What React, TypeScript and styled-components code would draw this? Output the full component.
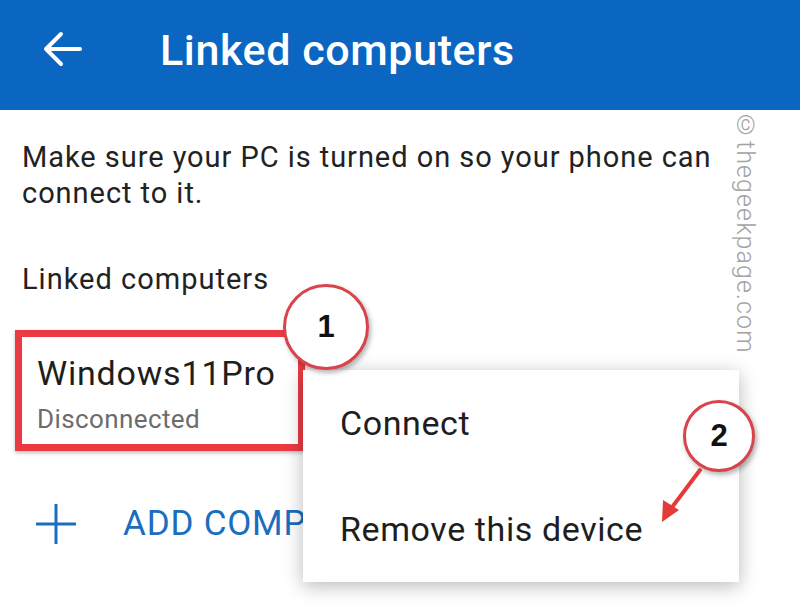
import React from "react";
import styled, { createGlobalStyle } from "styled-components";

const GlobalStyle = createGlobalStyle`
    body {
        margin: 0;
        background: #ffffff;
        font-family: Roboto, "Noto Sans", Arial, sans-serif;
        overflow: hidden;
    }
`;

const Screen = styled.div`
    position: relative;
    width: 800px;
    height: 611px;
    overflow: hidden;
    background: #ffffff;
`;

const AppBar = styled.header`
    display: flex;
    align-items: center;
    height: 110px;
    padding-left: 40px;
    background-color: #0b66c2;
    box-sizing: border-box;
`;

const BackButton = styled.button`
    display: flex;
    align-items: center;
    justify-content: center;
    width: 44px;
    height: 44px;
    padding: 0;
    border: none;
    background: transparent;
    margin-top: -12px;
`;

const AppTitle = styled.h1`
    margin: -10px 0 0 76px;
    font-size: 43px;
    font-weight: 500;
    color: #ffffff;
    letter-spacing: 0.6px;
`;

const Content = styled.main`
    padding: 29px 22px 0;
`;

const Intro = styled.p`
    margin: 0;
    font-size: 29px;
    line-height: 36px;
    letter-spacing: 0.95px;
    color: #222222;
`;

const SectionLabel = styled.h2`
    margin: 50px 0 0;
    font-size: 29px;
    line-height: 36px;
    letter-spacing: 1px;
    font-weight: 400;
    color: #222222;
`;

// red highlight drawn around the device row
const DeviceCard = styled.div`
    width: 261px;
    margin: 33px 0 0 -7px;
    padding: 16px 0 9px 15px;
    border: 7px solid #ec3a42;
    box-shadow: 0 2px 4px rgba(0, 0, 0, 0.25);
`;

const DeviceName = styled.div`
    font-size: 34px;
    line-height: 40px;
    letter-spacing: 0.8px;
    color: #1e1e1e;
`;

const DeviceStatus = styled.div`
    margin-top: 10px;
    font-size: 26px;
    line-height: 32px;
    letter-spacing: 0.4px;
    color: #6c6c6c;
`;

const AddRow = styled.div`
    display: flex;
    align-items: center;
    gap: 46px;
    margin: 52px 0 0 13px;
`;

const AddLabel = styled.span`
    font-size: 35px;
    line-height: 40px;
    letter-spacing: 0.8px;
    color: #1a6dbf;
    white-space: nowrap;
`;

const Menu = styled.ul`
    position: absolute;
    left: 303px;
    top: 370px;
    width: 436px;
    margin: 0;
    padding: 0;
    list-style: none;
    background: #ffffff;
    box-shadow: 0 4px 18px rgba(0, 0, 0, 0.28);
`;

const MenuItem = styled.li`
    display: flex;
    align-items: center;
    height: 106px;
    padding-left: 37px;
    font-size: 34px;
    letter-spacing: 0.6px;
    color: #1e1e1e;
`;

const Callout = styled.div<{ $x: number; $y: number; $r: number }>`
    position: absolute;
    left: ${({ $x, $r }) => $x - $r}px;
    top: ${({ $y, $r }) => $y - $r}px;
    width: ${({ $r }) => $r * 2}px;
    height: ${({ $r }) => $r * 2}px;
    box-sizing: border-box;
    display: flex;
    align-items: center;
    justify-content: center;
    border: 3px solid #d8434c;
    border-radius: 50%;
    background: #ffffff;
    box-shadow: 2px 3px 5px rgba(0, 0, 0, 0.3);
    font-family: "Liberation Sans", Arial, sans-serif;
    font-size: 31px;
    font-weight: 700;
    color: #111111;
`;

const PointerArrow = styled.svg`
    position: absolute;
    left: 640px;
    top: 460px;
`;

const Watermark = styled.div`
    position: absolute;
    left: 731px;
    top: 111px;
    writing-mode: vertical-rl;
    font-size: 25px;
    font-weight: 300;
    letter-spacing: 1.1px;
    color: #a3a3a3;
`;

export default function App() {
    return (
        <>
            <GlobalStyle />
            <Screen>
                <AppBar>
                    <BackButton aria-label="Back">
                        <svg width="40" height="36" viewBox="0 0 40 36" fill="none">
                            <path d="M38 18H4M19 3L4 18l15 15" stroke="#ffffff" strokeWidth="4" strokeLinecap="round" strokeLinejoin="round" />
                        </svg>
                    </BackButton>
                    <AppTitle>Linked computers</AppTitle>
                </AppBar>
                <Content>
                    <Intro>
                        Make sure your PC is turned on so your phone can
                        <br />
                        connect to it.
                    </Intro>
                    <SectionLabel>Linked computers</SectionLabel>
                    <DeviceCard>
                        <DeviceName>Windows11Pro</DeviceName>
                        <DeviceStatus>Disconnected</DeviceStatus>
                    </DeviceCard>
                    <AddRow>
                        <svg width="42" height="42" viewBox="0 0 42 42">
                            <path d="M21 1v40M1 21h40" stroke="#1a6dbf" strokeWidth="3" />
                        </svg>
                        <AddLabel>ADD COMP</AddLabel>
                    </AddRow>
                </Content>

                <Menu>
                    <MenuItem>Connect</MenuItem>
                    <MenuItem>Remove this device</MenuItem>
                </Menu>

                <Callout $x={326} $y={327} $r={43}>1</Callout>
                <Callout $x={719} $y={436} $r={36}>2</Callout>
                <PointerArrow width="70" height="72" viewBox="0 0 70 72">
                    <line x1="60" y1="10" x2="30" y2="50" stroke="#e53a3a" strokeWidth="4" strokeLinecap="round" />
                    <path d="M22 62L23 40L39 50Z" fill="#e53a3a" />
                </PointerArrow>

                <Watermark>©thegeekpage.com</Watermark>
            </Screen>
        </>
    );
}
